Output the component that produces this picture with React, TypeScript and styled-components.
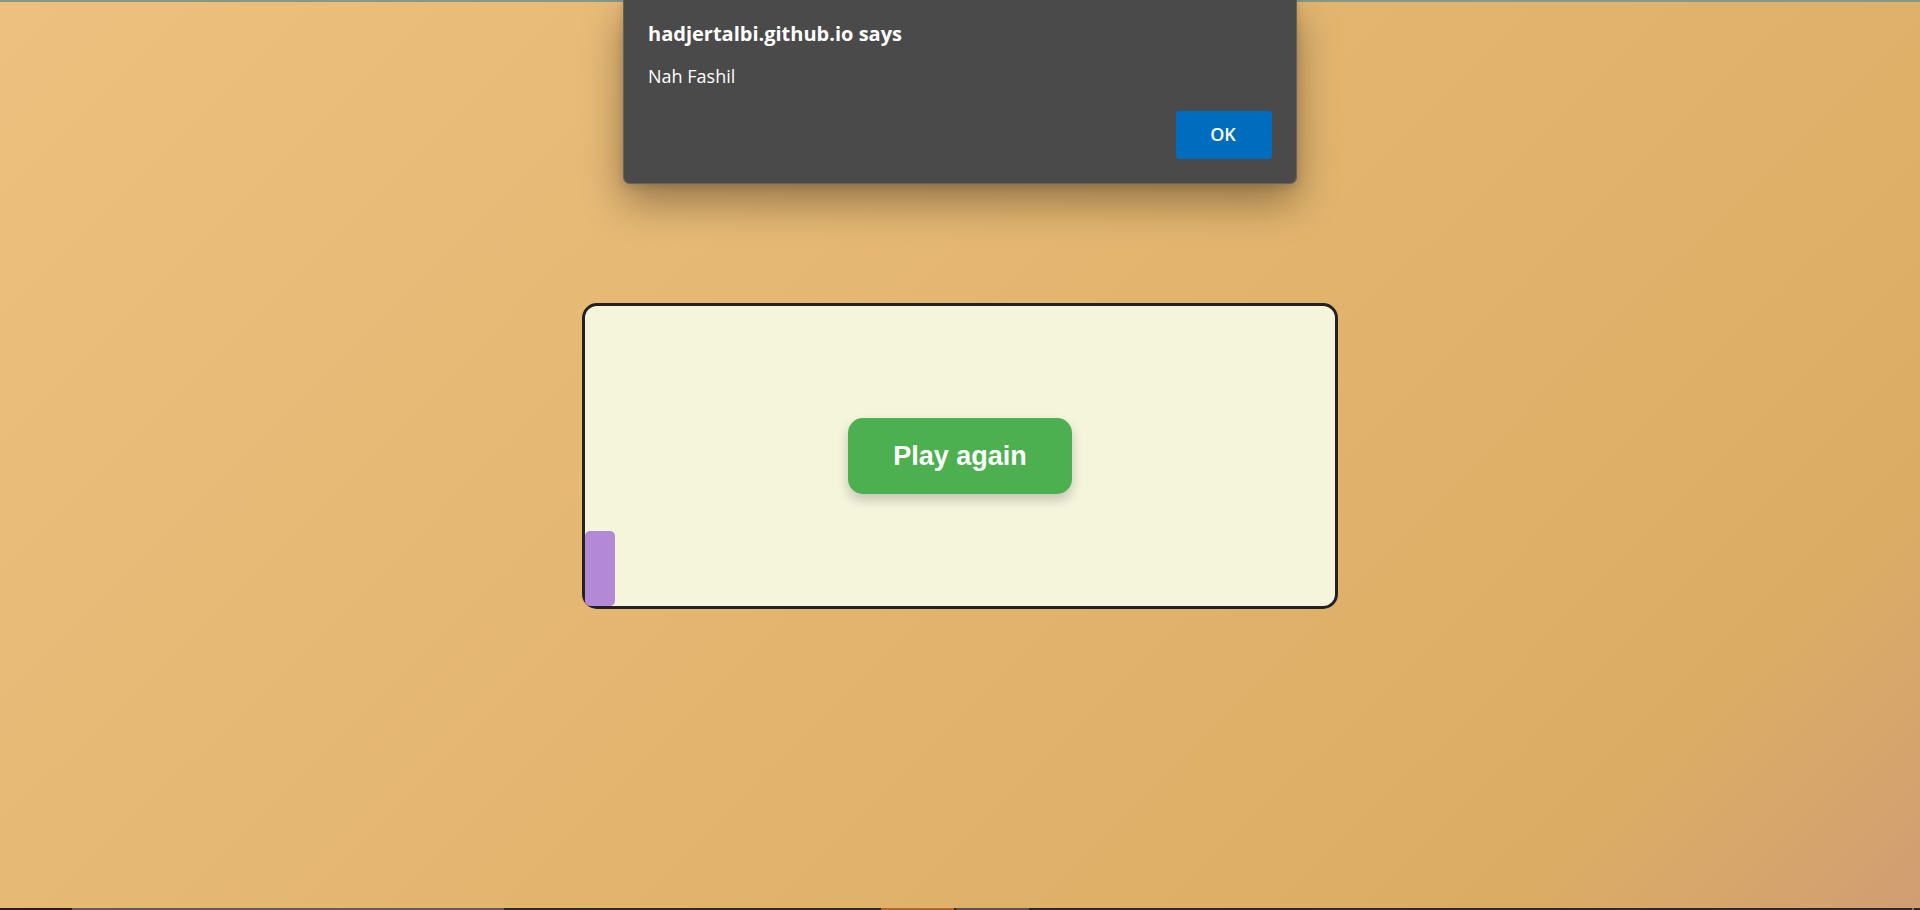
import React from "react";
import styled, { createGlobalStyle } from "styled-components";

const GlobalStyle = createGlobalStyle`
  *, *::before, *::after { box-sizing: border-box; }
  body { margin: 0; overflow: hidden; font-family: Arial, "Liberation Sans", sans-serif; }
`;

const Page = styled.div`
  position: relative;
  display: flex;
  flex-direction: column;
  height: 100vh;
  border-top: 2px solid #83998a;
  background: linear-gradient(135deg, #edc07f 0%, #dbad64 85%, #d9a969 89%, #d09e72 100%);
`;

const Stage = styled.main`
  flex: 1;
  display: flex;
  align-items: center;
  justify-content: center;
`;

const Board = styled.section`
  position: relative;
  display: flex;
  align-items: center;
  justify-content: center;
  width: 756px;
  max-width: 100%;
  height: 306px;
  border: 3px solid #222;
  border-radius: 15px;
  background: beige;
`;

const Player = styled.div`
  position: absolute;
  left: 0;
  bottom: 0;
  width: 30px;
  height: 75px;
  border-radius: 5px;
  background: #b388d7;
`;

const PlayButton = styled.button`
  padding: 22px 45px;
  border: 0;
  border-radius: 15px;
  background: #4caf50;
  color: #fff;
  font: bold 27px/32px Arial, "Liberation Sans", sans-serif;
  box-shadow: 0 6px 12px rgba(0, 0, 0, 0.2);
  cursor: pointer;
`;

const Dialog = styled.div`
  position: absolute;
  top: -2px;
  left: 50%;
  transform: translateX(-50%);
  display: flex;
  flex-direction: column;
  width: 674px;
  max-width: 100%;
  padding: 19px 24px 24px;
  border: 1px solid #6a6259;
  border-top: 0;
  border-radius: 0 0 7px 7px;
  background: #4a4a4a;
  color: #fff;
  font-family: "Segoe UI", "Open Sans", "Noto Sans", sans-serif;
  box-shadow: 0 18px 40px rgba(0, 0, 0, 0.36), 0 2px 8px rgba(0, 0, 0, 0.14);
`;

const DialogTitle = styled.h1`
  margin: 0 0 15px;
  font-size: 20px;
  font-weight: 700;
  line-height: 30px;
`;

const DialogMessage = styled.p`
  margin: 0 0 23px;
  font-size: 18px;
  line-height: 24px;
`;

const OkButton = styled.button`
  align-self: flex-end;
  width: 96px;
  height: 48px;
  padding: 0 2px 2px 0;
  border: 0;
  border-radius: 3px;
  background: #006cbe;
  color: #fff;
  font-family: inherit;
  font-size: 18px;
  font-weight: 600;
  cursor: pointer;
`;

const Taskbar = styled.div`
  position: absolute;
  left: 0;
  right: 0;
  bottom: 0;
  display: flex;
  height: 2px;
  background: #2b2b29;
`;

const Segment = styled.span<{ $grow: number; $color: string }>`
  flex: ${(p) => p.$grow} 1 0;
  background: ${(p) => p.$color};
`;

const segments: [number, string][] = [
  [72, "#2c1d1f"],
  [432, "#5f5c5c"],
  [377, "#2a2b24"],
  [73, "#b5652a"],
  [2, "#2a2a2a"],
  [73, "#555350"],
  [883, "#2b2a2a"],
  [2, "#777573"],
  [6, "#2b2a2a"],
];

export default function App() {
  return (
    <>
      <GlobalStyle />
      <Page>
        <Stage>
          <Board>
            <Player />
            <PlayButton type="button">Play again</PlayButton>
          </Board>
        </Stage>
        <Dialog role="alertdialog" aria-labelledby="dialog-title" aria-describedby="dialog-message">
          <DialogTitle id="dialog-title">hadjertalbi.github.io says</DialogTitle>
          <DialogMessage id="dialog-message">Nah Fashil</DialogMessage>
          <OkButton type="button">OK</OkButton>
        </Dialog>
        <Taskbar>
          {segments.map(([grow, color], i) => (
            <Segment key={i} $grow={grow} $color={color} />
          ))}
        </Taskbar>
      </Page>
    </>
  );
}
